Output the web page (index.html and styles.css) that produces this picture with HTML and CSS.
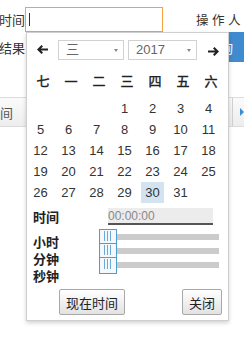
FILE: index.html
```html
<!DOCTYPE html>
<html lang="zh">

<head>
  <meta charset="UTF-8" />
  <meta name="viewport" content="width=device-width, initial-scale=1.0" />
  <title>时间选择</title>
  <link rel="stylesheet" href="styles.css">
</head>

<body>
  <div class="page">
    <div class="search-row">
      <span class="field-label">时间</span>
      <div class="date-input"><span class="caret"></span></div>
      <span class="operator">操 作 人</span>
    </div>

    <div class="result-row">
      <span class="field-label">结果</span>
      <button class="btn-query">查询</button>
    </div>

    <div class="tabs">
      <span class="tab">间</span>
      <span class="tab-next"></span>
    </div>

    <!-- date picker popup -->
    <div class="picker">
      <div class="picker-head">
        <span class="nav nav-prev">
          <svg width="11" height="9" viewBox="0 0 11 9"><polygon points="0,4.5 4.5,0 6,1.4 3.9,3.5 11,3.5 11,5.5 3.9,5.5 6,7.6 4.5,9" /></svg>
        </span>
        <div class="select select-month">三</div>
        <div class="select select-year">2017</div>
        <span class="nav nav-next">
          <svg width="11" height="9" viewBox="0 0 11 9"><polygon points="11,4.5 6.5,0 5,1.4 7.1,3.5 0,3.5 0,5.5 7.1,5.5 5,7.6 6.5,9" /></svg>
        </span>
      </div>

      <div class="week-head">
        <span>七</span><span>一</span><span>二</span><span>三</span><span>四</span><span>五</span><span>六</span>
      </div>

      <div class="days">
        <span></span><span></span><span></span>
        <span>1</span><span>2</span><span>3</span><span>4</span>
        <span>5</span><span>6</span><span>7</span><span>8</span><span>9</span><span>10</span><span>11</span>
        <span>12</span><span>13</span><span>14</span><span>15</span><span>16</span><span>17</span><span>18</span>
        <span>19</span><span>20</span><span>21</span><span>22</span><span>23</span><span>24</span><span>25</span>
        <span>26</span><span>27</span><span>28</span><span>29</span><span class="today">30</span><span>31</span>
      </div>

      <div class="time-row">
        <span class="time-label">时间</span>
        <div class="time-value">00:00:00</div>
      </div>

      <div class="slider-area">
        <div class="slider-labels">
          <span>小时</span>
          <span>分钟</span>
          <span>秒钟</span>
        </div>
        <div class="sliders">
          <div class="slider"><span class="handle"></span><span class="track"></span></div>
          <div class="slider"><span class="handle"></span><span class="track"></span></div>
          <div class="slider last"><span class="handle"></span><span class="track"></span></div>
        </div>
      </div>

      <div class="picker-foot">
        <button class="btn">现在时间</button>
        <button class="btn">关闭</button>
      </div>
    </div>
  </div>
</body>

</html>
```

FILE: styles.css
```css
html,
body {
  margin: 0;
  padding: 0;
}

body {
  font-family: "Liberation Sans", "Noto Sans CJK SC", sans-serif;
  font-size: 13px;
  color: #333;
  background: #fff;
  overflow: hidden;
}

.page {
  position: relative;
  width: 244px;
  height: 338px;
  overflow: hidden;
}

/* page underneath the popup */
.search-row {
  display: flex;
  align-items: center;
  height: 25px;
  margin-top: 7px;
  white-space: nowrap;
}

.field-label {
  width: 26px;
  flex: none;
  margin-left: -1px;
  color: #333;
}

.date-input {
  width: 138px;
  height: 25px;
  flex: none;
  box-sizing: border-box;
  border: 1px solid #f4a23c;
  display: flex;
  align-items: center;
  padding-left: 3px;
}

.caret {
  width: 1px;
  height: 13px;
  background: #333;
}

.operator {
  margin-left: 33px;
  font-size: 12.5px;
}

.result-row {
  display: flex;
  align-items: center;
  height: 30px;
  white-space: nowrap;
}

.btn-query {
  flex: none;
  margin-left: 170px;
  height: 30px;
  width: 80px;
  padding: 0 0 0 12px;
  text-align: left;
  border: none;
  background: #3f8bd0;
  color: #fff;
  font-family: inherit;
  font-size: 13px;
}

.tabs {
  display: flex;
  align-items: center;
  height: 30px;
  margin-top: 35px;
  box-sizing: border-box;
  border-top: 1px solid #dcdcdc;
  border-bottom: 1px solid #dcdcdc;
  background: linear-gradient(#fbfbfb, #ededed);
}

.tab {
  color: #555;
}

.tab-next {
  margin-left: auto;
  width: 12px;
  height: 100%;
  box-sizing: border-box;
  border-left: 1px solid #d0d0d0;
  display: flex;
  align-items: center;
  justify-content: flex-end;
}

.tab-next::after {
  content: "";
  border-left: 4px solid #3f8bd0;
  border-top: 4px solid transparent;
  border-bottom: 4px solid transparent;
}

/* date picker */
.picker {
  position: absolute;
  left: 26px;
  top: 32px;
  width: 203px;
  height: 289px;
  box-sizing: border-box;
  border: 1px solid #cfcfcf;
  background: #fff;
  box-shadow: 0 2px 4px rgba(0, 0, 0, 0.18);
  padding: 7px 2px 0;
}

.picker-head {
  display: flex;
  align-items: center;
  height: 20px;
}

.nav {
  display: flex;
  width: 11px;
  fill: #222;
}

.nav-prev {
  margin-left: 8px;
  margin-top: -2px;
}

.nav-next {
  margin-left: 11px;
  margin-top: 2px;
}

.select {
  position: relative;
  height: 20px;
  box-sizing: border-box;
  border: 1px solid #d2d2d2;
  color: #666;
  line-height: 18px;
  padding-left: 7px;
}

.select::after {
  content: "";
  position: absolute;
  right: 5px;
  top: 8px;
  border-top: 3px solid #888;
  border-left: 2px solid transparent;
  border-right: 2px solid transparent;
}

.select-month {
  width: 66px;
  margin-left: 10px;
}

.select-year {
  width: 69px;
  margin-left: 4px;
}

.week-head {
  display: grid;
  grid-template-columns: repeat(7, 28px);
  height: 20px;
  line-height: 20px;
  margin-top: 12px;
  text-align: center;
  color: #222;
  -webkit-text-stroke: 0.4px #222;
}

.days {
  display: grid;
  grid-template-columns: repeat(7, 23px);
  grid-auto-rows: 21px;
  column-gap: 5px;
  margin-top: 6px;
  text-align: center;
  line-height: 21px;
  color: #333;
}

.days .today {
  background: #d3e3ef;
}

.time-row {
  display: flex;
  align-items: center;
  height: 17px;
  margin-top: 5px;
  padding-left: 4px;
}

.time-label {
  width: 75px;
  font-weight: bold;
  color: #222;
}

.time-value {
  width: 105px;
  height: 17px;
  box-sizing: border-box;
  background: #ececec;
  border-bottom: 2px solid #555;
  color: #888;
  font-size: 12px;
  line-height: 16px;
}

.slider-area {
  display: flex;
  padding-left: 4px;
  margin-top: 4px;
}

.slider-labels {
  display: flex;
  flex-direction: column;
  width: 66px;
  padding-top: 5px;
  font-weight: bold;
  color: #222;
  line-height: 17px;
}

.sliders {
  display: flex;
  flex-direction: column;
}

.slider {
  display: flex;
  align-items: flex-start;
  height: 14px;
}

.handle {
  position: relative;
  width: 18px;
  height: 15px;
  box-sizing: border-box;
  border: 1px solid #4a9ed2;
  background: #f4f8fb;
  flex: none;
  z-index: 1;
}

.slider.last .handle {
  height: 17px;
}

/* grip lines */
.handle::after {
  content: "";
  position: absolute;
  left: 4px;
  top: 1px;
  width: 7px;
  height: 10px;
  background: linear-gradient(to right, #6aaad8 1px, transparent 1px, transparent 3px, #6aaad8 3px, #6aaad8 4px, transparent 4px, transparent 6px, #6aaad8 6px);
}

.track {
  width: 102px;
  height: 6px;
  margin-top: 5px;
  background: #cbcbcb;
}

.picker-foot {
  display: flex;
  justify-content: space-between;
  margin-top: 4px;
  padding: 0 4px 0 30px;
}

.btn {
  height: 26px;
  padding: 0 6px;
  border: 1px solid #a8a8a8;
  border-radius: 2px;
  background: linear-gradient(#ffffff, #e2e2e2);
  color: #222;
  font-family: inherit;
  font-size: 13px;
}
```
